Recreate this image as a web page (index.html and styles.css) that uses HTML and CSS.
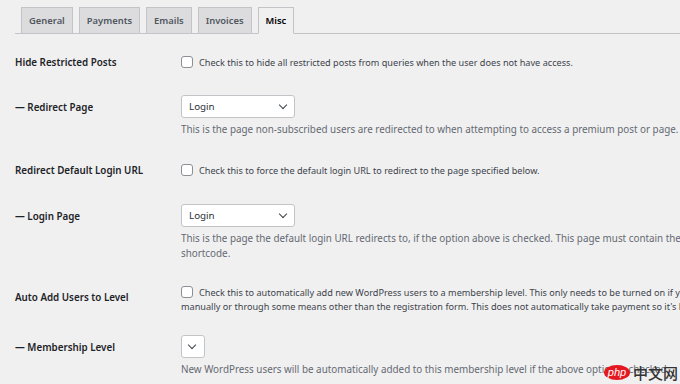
FILE: index.html
```html
<!DOCTYPE html>
<html lang="en">

<head>
    <meta charset="UTF-8">
    <meta name="viewport" content="width=device-width, initial-scale=1.0">
    <title>Misc Settings</title>

    <link rel="stylesheet" href="styles.css">
</head>

<body>
    <nav class="tabs">
        <a class="tab">General</a>
        <a class="tab">Payments</a>
        <a class="tab">Emails</a>
        <a class="tab">Invoices</a>
        <a class="tab active">Misc</a>
    </nav>

    <div class="form">
        <div class="row first">
            <div class="label">Hide Restricted Posts</div>
            <div class="field">
                <label class="check"><span class="box"></span>Check this to hide all restricted posts from queries when the user does not have access.</label>
            </div>
        </div>

        <div class="row">
            <div class="label sub">— Redirect Page</div>
            <div class="field">
                <div class="select">Login <span class="chev"></span></div>
                <p class="desc">This is the page non-subscribed users are redirected to when attempting to access a premium post or page.</p>
            </div>
        </div>

        <div class="row">
            <div class="label">Redirect Default Login URL</div>
            <div class="field">
                <label class="check"><span class="box"></span>Check this to force the default login URL to redirect to the page specified below.</label>
            </div>
        </div>

        <div class="row mid">
            <div class="label sub">— Login Page</div>
            <div class="field">
                <div class="select">Login <span class="chev"></span></div>
                <p class="desc">This is the page the default login URL redirects to, if the option above is checked. This page must contain the [pmpro_login]<br>shortcode.</p>
            </div>
        </div>

        <div class="row tight">
            <div class="label low">Auto Add Users to Level</div>
            <div class="field">
                <label class="check long"><span class="box"></span>Check this to automatically add new WordPress users to a membership level. This only needs to be turned on if you are adding users<br>manually or through some means other than the registration form. This does not automatically take payment so it's best used for free levels.</label>
            </div>
        </div>

        <div class="row">
            <div class="label sub">— Membership Level</div>
            <div class="field">
                <div class="select empty"><span class="chev"></span></div>
                <p class="desc">New WordPress users will be automatically added to this membership level if the above option is checked.</p>
            </div>
        </div>
    </div>

    <div class="mark"><span class="php">php</span><span class="cn">中文网</span></div>
</body>

</html>
```

FILE: styles.css
```css
html,
body {
    margin: 0;
    height: 100%;
    overflow: hidden;
}

body {
    background-color: #f0f0f1;
    color: #3c434a;
    font-family: "Noto Sans", "Open Sans", sans-serif;
    font-size: 9.15px;
    line-height: 15px;
}

.tabs {
    display: flex;
    gap: 6px;
    margin: 7px 0 0 15px;
    padding-left: 6px;
    border-bottom: 1px solid #c3c4c7;
}

.tab {
    height: 25px;
    padding: 0 7px;
    margin-bottom: -1px;
    font-size: 9.4px;
    font-weight: 600;
    line-height: 25px;
    color: #50575e;
    background-color: #dcdcde;
    border: 1px solid #c3c4c7;
}

.tab.active {
    color: #000;
    background-color: #f0f0f1;
    border-bottom-color: #f0f0f1;
}

.form {
    padding: 21px 0 0 15px;
}

.row {
    display: flex;
    align-items: flex-start;
    margin-bottom: 26px;
}

.row.first {
    margin-bottom: 25px;
}

.row.mid {
    margin-bottom: 25px;
}

.row.tight {
    margin-bottom: 21px;
}

.label {
    flex: none;
    width: 166px;
    font-size: 9.8px;
    font-weight: 600;
    color: #1d2327;
}

.label.sub {
    padding-top: 5px;
}

.label.low {
    padding-top: 4px;
}

.field {
    flex: none;
    width: 900px;
}

.check {
    display: block;
}

.check.long {
    line-height: 14px;
}

.box {
    display: inline-block;
    width: 10px;
    height: 10px;
    margin-right: 6px;
    vertical-align: -2px;
    background-color: #fff;
    border: 1px solid #8c8f94;
    border-radius: 3px;
}

.select {
    position: relative;
    width: 105px;
    height: 21px;
    padding-left: 7px;
    font-size: 9.8px;
    line-height: 21px;
    color: #2c3338;
    background-color: #fff;
    border: 1px solid #c3c4c7;
    border-radius: 3px;
}

.select.empty {
    width: 15px;
}

.chev {
    position: absolute;
    top: 6px;
    right: 8px;
    width: 5px;
    height: 5px;
    border-right: 1.3px solid #3c434a;
    border-bottom: 1.3px solid #3c434a;
    transform: rotate(45deg);
}

.select.empty .chev {
    right: 9px;
}

.desc {
    margin: 4px 0 0;
    font-size: 9.85px;
    color: #646970;
}

.mark {
    position: absolute;
    right: 2px;
    bottom: 4px;
    display: flex;
    align-items: center;
    gap: 3px;
}

.php {
    width: 26px;
    height: 15px;
    font-family: "Liberation Sans", sans-serif;
    font-size: 11px;
    font-style: italic;
    line-height: 14px;
    text-align: center;
    color: #fff;
    background-color: #e5171f;
    border-radius: 50%;
}

.cn {
    font-family: "Noto Sans CJK SC", sans-serif;
    font-size: 15px;
    font-weight: 500;
    line-height: 15px;
    color: #333;
}
```
